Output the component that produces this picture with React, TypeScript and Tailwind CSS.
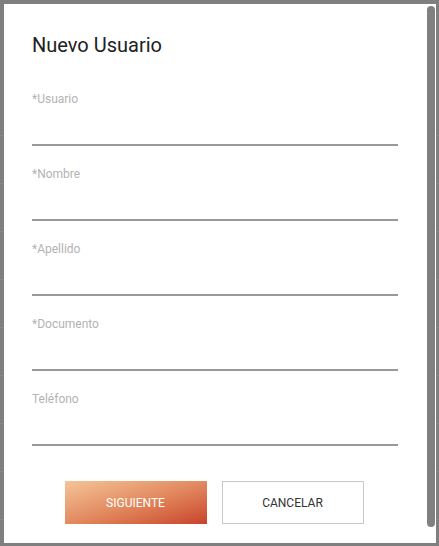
import React from "react";

const fields = ["*Usuario", "*Nombre", "*Apellido", "*Documento", "Teléfono"];

export default function App() {
  return (
    <div
      className="relative h-[546px] w-[439px] overflow-hidden bg-[#7f7f7f]"
      style={{ fontFamily: "Roboto, 'Liberation Sans', sans-serif" }}
    >
      {/* page behind the overlay */}
      <div className="flex flex-col pt-[88px]">
        {Array.from({ length: 10 }).map((_, i) => (
          <div key={i} className="h-[48px] border-b border-[#8a8a8a]" />
        ))}
      </div>

      {/* dialog */}
      <div className="absolute left-[4px] top-[4px] flex h-[539px] w-[432px] bg-white">
        <div className="flex w-[422px] flex-col px-[28px] pt-[29px]">
          <h2 className="text-[20px] leading-[24px] text-[#212121]">Nuevo Usuario</h2>
          <div className="mt-[34px] flex flex-col gap-[20px]">
            {fields.map((f) => (
              <div key={f} className="flex flex-col">
                <label className="text-[12px] leading-[16px] text-[#b3b3b3]">{f}</label>
                <div className="h-[39px] border-b-2 border-[#999999]" />
              </div>
            ))}
          </div>
          <div className="mt-[35px] flex justify-center gap-[15px] pr-[2px]">
            <button className="h-[43px] w-[142px] bg-linear-to-br from-[#f4c597] via-[#e28a60] to-[#c8412a] text-[12px] text-white">
              SIGUIENTE
            </button>
            <button className="h-[43px] w-[142px] border border-[#c8c8c8] bg-white text-[12px] text-[#333333]">
              CANCELAR
            </button>
          </div>
        </div>
        <div className="flex w-[10px] justify-center pb-[16px] pt-[2px]">
          <div className="w-[8px] rounded-full bg-[#808080]" />
        </div>
      </div>
    </div>
  );
}
